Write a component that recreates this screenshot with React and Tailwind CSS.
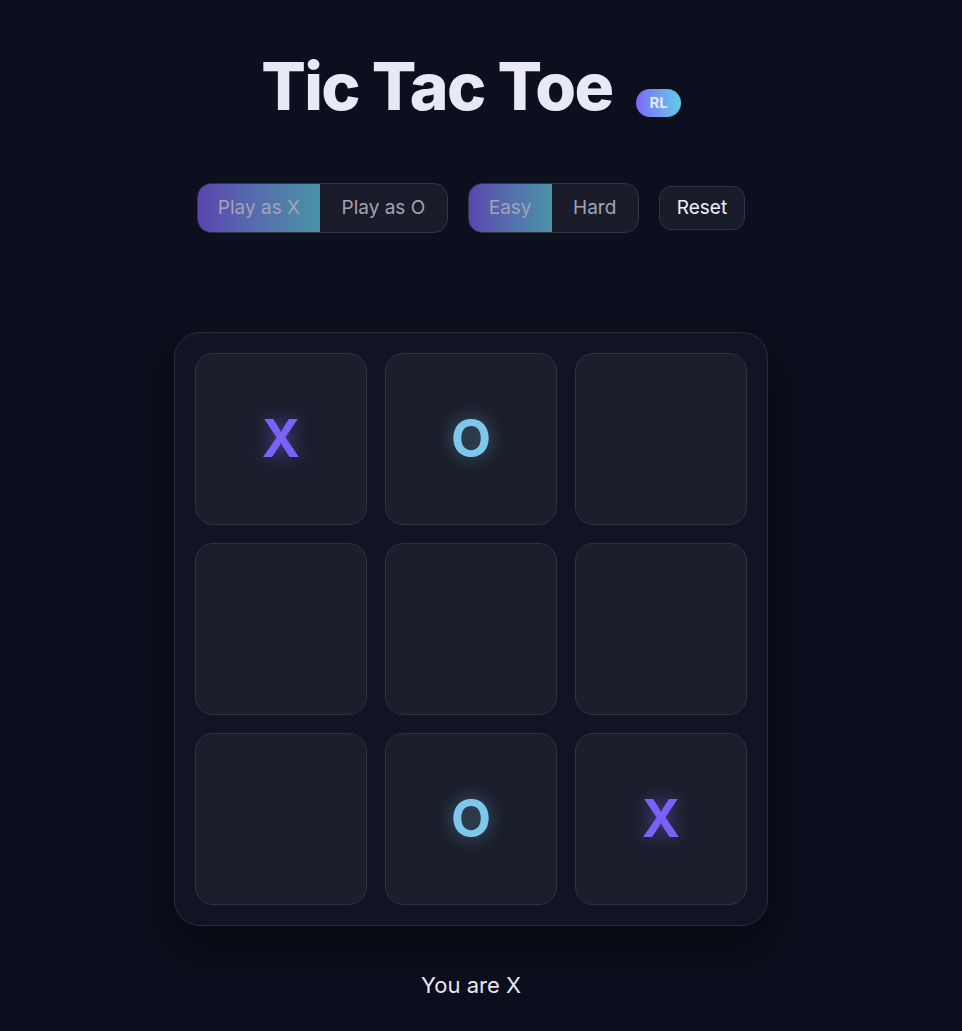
import { useState } from 'react'

// Plateau de départ, tel que sur la capture.
const BOARD = ['X', 'O', '', '', '', '', '', 'O', 'X']

function Segmented({ options, active }) {
  return (
    <div className="flex h-[50px] overflow-hidden rounded-[14px] border border-[#2f3342] bg-[#1a1d29]">
      {options.map((opt) => (
        <button
          key={opt}
          className={
            opt === active
              ? 'px-5 text-[19px] text-[#a3a3b4] bg-gradient-to-r from-[#5944b0] to-[#4893a6]'
              : 'px-[21.5px] text-[19px] text-[#a3a3b4]'
          }
        >
          {opt}
        </button>
      ))}
    </div>
  )
}

function Cell({ value }) {
  return (
    <div className="flex h-[172px] w-[172px] items-center justify-center rounded-[18px] border border-[#2f3342] bg-[#1b1e2b]">
      {value === 'X' && (
        <span className="text-[52px] font-bold text-[#7a62f8] [text-shadow:0_0_18px_rgba(122,98,248,0.55)]">X</span>
      )}
      {value === 'O' && (
        <span className="text-[52px] font-bold text-[#7ec6ea] [text-shadow:0_0_18px_rgba(126,198,234,0.45)]">O</span>
      )}
    </div>
  )
}

export default function App() {
  const [board] = useState(BOARD)

  return (
    <div className="min-h-[1031px] bg-[#0c0f1d] pr-[20px] font-['Inter','Liberation_Sans',sans-serif] text-[#e7e8f3]">
      <div className="flex flex-col items-center">
        <div className="mt-[42px] flex items-end gap-6">
          <h1 className="text-[66px] leading-[88px] font-extrabold tracking-tight text-[#e8e9f5]">Tic Tac Toe</h1>
          <span className="mb-[13px] rounded-full bg-gradient-to-r from-[#7a66f6] to-[#5ecbe9] px-[13px] py-[3px] text-[15px] font-bold text-[#e6e7f7]">
            RL
          </span>
        </div>

        <div className="mt-[53px] flex items-center gap-5">
          <Segmented options={['Play as X', 'Play as O']} active="Play as X" />
          <Segmented options={['Easy', 'Hard']} active="Easy" />
          <button className="h-[44px] rounded-[12px] border border-[#2f3342] bg-[#1a1d29] px-[17px] text-[19px] text-[#eef0f8]">
            Reset
          </button>
        </div>

        <div className="mt-[99px] rounded-[26px] border border-[#2a2d3b] bg-[#111422] p-5 shadow-[0_20px_50px_rgba(0,0,0,0.45)]">
          <div className="grid grid-cols-3 gap-[18px]">
            {board.map((v, i) => (
              <Cell key={i} value={v} />
            ))}
          </div>
        </div>

        <p className="mt-[43px] text-[22px] text-[#e7e8f3]">You are X</p>
      </div>
    </div>
  )
}
